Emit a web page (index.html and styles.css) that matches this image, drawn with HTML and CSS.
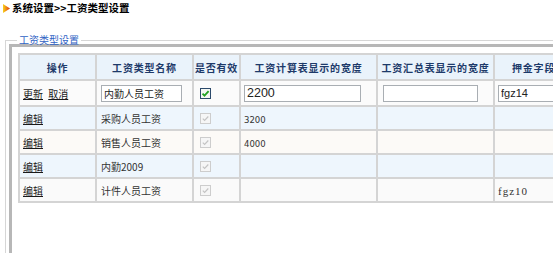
FILE: index.html
```html
<!DOCTYPE html>
<html lang="zh-CN">
<head>
<meta charset="utf-8">
<title>工资类型设置</title>
<link rel="stylesheet" href="styles.css">
</head>
<body>
<div class="title">
  <svg class="arrow" width="7" height="9" viewBox="0 0 7 9">
    <defs>
      <linearGradient id="ag" x1="0" y1="0" x2="1" y2="0">
        <stop offset="0" stop-color="#f7d31e"/>
        <stop offset="0.45" stop-color="#f08a14"/>
        <stop offset="1" stop-color="#d8340c"/>
      </linearGradient>
    </defs>
    <polygon points="0,0 7,4.5 0,9" fill="url(#ag)"/>
  </svg>
  <span class="title-text">系统设置&gt;&gt;工资类型设置</span>
</div>
<fieldset class="panel">
  <legend class="panel-legend">工资类型设置</legend>
  <div class="inner">
    <table class="grid">
      <colgroup>
        <col class="c-op"><col class="c-name"><col class="c-valid"><col class="c-calc"><col class="c-sum"><col class="c-dep">
      </colgroup>
      <thead>
        <tr class="head">
          <th>操作</th><th>工资类型名称</th><th>是否有效</th><th>工资计算表显示的宽度</th><th>工资汇总表显示的宽度</th><th class="dep-head">押金字段</th>
        </tr>
      </thead>
      <tbody>
        <tr class="r-edit">
          <td class="op"><a class="lnk" href="#">更新</a> <a class="lnk" href="#">取消</a></td>
          <td class="name"><input class="in in-name" type="text" value="内勤人员工资"></td>
          <td class="valid"><svg class="cb" width="11" height="11" viewBox="0 0 11 11"><rect x="0.5" y="0.5" width="10" height="10" fill="#f4f8f4" stroke="#2c4a6b"/><path d="M2.5 5.6 L4.5 7.6 L8.6 3.2" fill="none" stroke="#22a322" stroke-width="1.8"/></svg></td>
          <td class="num"><input class="in in-calc" type="text" value="2200"></td>
          <td class="num"><input class="in in-sum" type="text" value=""></td>
          <td class="dep"><input class="in in-dep" type="text" value="fgz14"></td>
        </tr>
        <tr class="r-blue">
          <td class="op"><a class="lnk" href="#">编辑</a></td>
          <td class="name">采购人员工资</td>
          <td class="valid"><svg class="cb" width="11" height="11" viewBox="0 0 11 11"><rect x="0.5" y="0.5" width="10" height="10" fill="#f6f6f6" stroke="#cdcdcd"/><path d="M2.8 5.6 L4.6 7.4 L8.3 3.5" fill="none" stroke="#c4c4c4" stroke-width="1.2"/></svg></td>
          <td class="num"><span class="digits">3200</span></td>
          <td></td>
          <td class="dep"></td>
        </tr>
        <tr class="r-warm">
          <td class="op"><a class="lnk" href="#">编辑</a></td>
          <td class="name">销售人员工资</td>
          <td class="valid"><svg class="cb" width="11" height="11" viewBox="0 0 11 11"><rect x="0.5" y="0.5" width="10" height="10" fill="#f6f6f6" stroke="#cdcdcd"/><path d="M2.8 5.6 L4.6 7.4 L8.3 3.5" fill="none" stroke="#c4c4c4" stroke-width="1.2"/></svg></td>
          <td class="num"><span class="digits">4000</span></td>
          <td></td>
          <td class="dep"></td>
        </tr>
        <tr class="r-blue">
          <td class="op"><a class="lnk" href="#">编辑</a></td>
          <td class="name">内勤2009</td>
          <td class="valid"><svg class="cb" width="11" height="11" viewBox="0 0 11 11"><rect x="0.5" y="0.5" width="10" height="10" fill="#f6f6f6" stroke="#cdcdcd"/><path d="M2.8 5.6 L4.6 7.4 L8.3 3.5" fill="none" stroke="#c4c4c4" stroke-width="1.2"/></svg></td>
          <td class="num"></td>
          <td></td>
          <td class="dep"></td>
        </tr>
        <tr class="r-white">
          <td class="op"><a class="lnk" href="#">编辑</a></td>
          <td class="name">计件人员工资</td>
          <td class="valid"><svg class="cb" width="11" height="11" viewBox="0 0 11 11"><rect x="0.5" y="0.5" width="10" height="10" fill="#f6f6f6" stroke="#cdcdcd"/><path d="M2.8 5.6 L4.6 7.4 L8.3 3.5" fill="none" stroke="#c4c4c4" stroke-width="1.2"/></svg></td>
          <td class="num"></td>
          <td></td>
          <td class="dep"><span class="serif">fgz10</span></td>
        </tr>
      </tbody>
    </table>
  </div>
</fieldset>
</body>
</html>
```
FILE: styles.css
```css
html, body {
  margin: 0;
  padding: 0;
  background: #ffffff;
  overflow: hidden;
}
body {
  width: 553px;
  height: 253px;
  font-family: "Noto Sans CJK SC", "DejaVu Sans", sans-serif;
  font-size: 10px;
  color: #333333;
}
.title {
  display: flex;
  align-items: center;
  gap: 2px;
  height: 12px;
  padding: 2px 0 0 3px;
}
.arrow {
  display: block;
  flex: none;
}
.title-text {
  font-size: 10.5px;
  line-height: 12px;
  font-weight: bold;
  color: #000000;
}
.panel {
  margin: 21px 0 0 5px;
  padding: 0 0 0 3px;
  border: 1px solid #d6d6d6;
  border-right: none;
  border-bottom: none;
  width: 620px;
  min-width: 0;
  box-sizing: border-box;
}
.panel-legend {
  font-size: 10px;
  line-height: 10px;
  color: #2f62c4;
  padding: 0 2px;
  margin-left: 8px;
  margin-bottom: -1px;
}
.inner {
  border-top: 3px solid #b7b7b7;
  border-left: 3px solid #b7b7b7;
  padding: 6px 0 0 6px;
  height: 230px;
  background: #ffffff;
}
.grid {
  border-collapse: collapse;
  table-layout: fixed;
  width: 575px;
  border: 1px solid #bdbdbd;
}
.c-op { width: 77px; }
.c-name { width: 97px; }
.c-valid { width: 47px; }
.c-calc { width: 137px; }
.c-sum { width: 117px; }
.c-dep { width: 100px; }
.grid th,
.grid td {
  border: 2px solid #d4d4d4;
  padding: 0;
  height: 22px;
  vertical-align: middle;
  white-space: nowrap;
  overflow: hidden;
}
.grid th {
  height: 24px;
  background: #eaf3fb;
  color: #1d3a6a;
  font-weight: bold;
  font-size: 10px;
  letter-spacing: 0.8px;
  text-align: center;
}
.grid .dep-head {
  text-align: left;
  padding-left: 17px;
}
.r-edit td { height: 24px; background: #fbfbfb; }
.r-blue td { background: #eef6fd; }
.r-warm td { background: #fcfaf7; }
.r-white td { background: #fafafa; }
.op {
  padding-left: 3px !important;
}
.lnk,
.lnk:link,
.lnk:visited {
  color: #1a1a1a;
  text-decoration: underline;
  margin-right: 3px;
}
.name {
  padding-left: 4px !important;
}
.valid {
  padding-left: 6px !important;
}
.cb {
  display: block;
}
.num {
  padding-left: 3px !important;
}
.dep {
  padding-left: 3px !important;
}
.digits {
  font-family: "DejaVu Sans", sans-serif;
  font-size: 8.5px;
  color: #333333;
}
.serif {
  font-family: "Liberation Serif", serif;
  font-size: 11px;
  letter-spacing: 1px;
  color: #333333;
}
.in {
  display: block;
  box-sizing: border-box;
  height: 17px;
  margin: 0;
  padding: 0 2px;
  border: 1px solid #a9aeb3;
  background: #ffffff;
  color: #222222;
  outline: none;
}
.in-name {
  width: 81px;
  font-family: "Noto Sans CJK SC", sans-serif;
  font-size: 10px;
}
.in-calc {
  width: 117px;
  font-family: "Liberation Sans", sans-serif;
  font-size: 12.5px;
}
.in-sum {
  width: 95px;
  margin-left: 2px;
}
.in-dep {
  width: 96px;
  font-family: "Liberation Sans", sans-serif;
  font-size: 11px;
}
```
